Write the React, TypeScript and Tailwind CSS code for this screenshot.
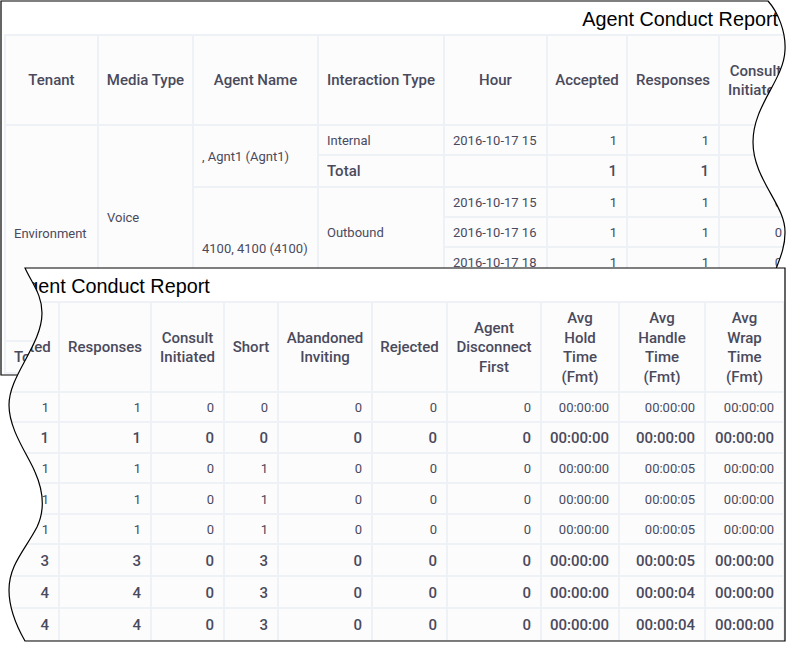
const head = "border-2 border-[#eef1f5] px-1 pt-[2px] text-center align-middle text-[15px] font-medium leading-[19.5px] whitespace-nowrap";
const cell = "border-2 border-[#eef1f5] px-[8px] pt-px text-[13px] align-middle whitespace-nowrap";
const num = "border-2 border-[#eef1f5] pr-[9px] pl-0 pt-px text-right text-[13px] align-middle whitespace-nowrap";
const totalNum = "border-2 border-[#eef1f5] pr-[9px] pl-0 pt-px text-right text-[15px] font-medium align-middle whitespace-nowrap";
const frontNum = "border-2 border-[#eef1f5] pr-[9px] pl-0 pt-[2px] text-right text-[13px] align-middle whitespace-nowrap";
const frontTotal = "border-2 border-[#eef1f5] pr-[9px] pl-0 pt-[2px] text-right text-[15px] font-medium align-middle whitespace-nowrap";

const backRows = [
  ["2016-10-17 15", "1", "1", "0"],
  ["2016-10-17 16", "1", "1", "0"],
  ["2016-10-17 18", "1", "1", "0"],
];

const frontCols = [80, 92, 73, 54, 94, 75, 94, 78, 86, 79];
const frontHeaders = [
  ["Accepted"],
  ["Responses"],
  ["Consult", "Initiated"],
  ["Short"],
  ["Abandoned", "Inviting"],
  ["Rejected"],
  ["Agent", "Disconnect", "First"],
  ["Avg", "Hold", "Time", "(Fmt)"],
  ["Avg", "Handle", "Time", "(Fmt)"],
  ["Avg", "Wrap", "Time", "(Fmt)"],
];

const frontRows = [
  { total: false, h: "h-[30px]", v: ["1", "1", "0", "0", "0", "0", "0", "00:00:00", "00:00:00", "00:00:00"] },
  { total: true, h: "h-[31px]", v: ["1", "1", "0", "0", "0", "0", "0", "00:00:00", "00:00:00", "00:00:00"] },
  { total: false, h: "h-[30px]", v: ["1", "1", "0", "1", "0", "0", "0", "00:00:00", "00:00:05", "00:00:00"] },
  { total: false, h: "h-[31px]", v: ["1", "1", "0", "1", "0", "0", "0", "00:00:00", "00:00:05", "00:00:00"] },
  { total: false, h: "h-[30px]", v: ["1", "1", "0", "1", "0", "0", "0", "00:00:00", "00:00:05", "00:00:00"] },
  { total: true, h: "h-[32px]", v: ["3", "3", "0", "3", "0", "0", "0", "00:00:00", "00:00:05", "00:00:00"] },
  { total: true, h: "h-[32px]", v: ["4", "4", "0", "3", "0", "0", "0", "00:00:00", "00:00:04", "00:00:00"] },
  { total: true, h: "h-[33px]", v: ["4", "4", "0", "3", "0", "0", "0", "00:00:00", "00:00:04", "00:00:00"] },
];

function BackPanel() {
  return (
    <div className="absolute left-0 top-0 h-[376px] w-[787px]">
      <div className="h-full w-full overflow-hidden bg-white [clip-path:path('M1,1H768C778,12_786,32_785,50C784,80_753,105_753,142C753,180_786,205_785,233C785,250_778,262_772,280V375H1Z')]">
        <div className="flex h-[34px] items-center justify-end pr-[9px] pt-[5px] font-['Liberation_Sans',sans-serif] text-[19.8px] text-black">
          Agent Conduct Report
        </div>
        <table className="ml-[4px] w-[787px] table-fixed border-collapse bg-[#fcfcfd] font-['Roboto',sans-serif] text-[#4a4a5c]">
          <colgroup>
            <col className="w-[93px]" />
            <col className="w-[95px]" />
            <col className="w-[125px]" />
            <col className="w-[126px]" />
            <col className="w-[103px]" />
            <col className="w-[80px]" />
            <col className="w-[92px]" />
            <col className="w-[73px]" />
          </colgroup>
          <thead>
            <tr className="h-[90px]">
              {["Tenant", "Media Type", "Agent Name", "Interaction Type", "Hour", "Accepted", "Responses"].map((t) => (
                <th key={t} className={head}>{t}</th>
              ))}
              <th className={head}>Consult<br />Initiated</th>
            </tr>
          </thead>
          <tbody>
            <tr className="h-[30px]">
              <td rowSpan={7} className={cell}>Environment</td>
              <td rowSpan={6} className={cell}>Voice</td>
              <td rowSpan={2} className={cell}>, Agnt1 (Agnt1)</td>
              <td className={cell}>Internal</td>
              <td className={cell}>2016-10-17 15</td>
              <td className={num}>1</td>
              <td className={num}>1</td>
              <td className={num}>0</td>
            </tr>
            <tr className="h-[32px]">
              <td className={`${cell} !text-[15px] font-medium`}>Total</td>
              <td className={cell}></td>
              <td className={totalNum}>1</td>
              <td className={totalNum}>1</td>
              <td className={totalNum}>0</td>
            </tr>
            {backRows.map((r, i) => (
              <tr key={r[0]} className="h-[30px]">
                {i === 0 && <td rowSpan={4} className={cell}>4100, 4100 (4100)</td>}
                {i === 0 && <td rowSpan={3} className={cell}>Outbound</td>}
                <td className={cell}>{r[0]}</td>
                <td className={num}>{r[1]}</td>
                <td className={num}>{r[2]}</td>
                <td className={num}>{r[3]}</td>
              </tr>
            ))}
            <tr className="h-[32px]">
              <td colSpan={2} className={cell}>Total</td>
              <td className={totalNum}>3</td>
              <td className={totalNum}>3</td>
              <td className={totalNum}>0</td>
            </tr>
            <tr className="h-[32px]">
              <td colSpan={4} className={cell}>Total</td>
              <td className={totalNum}>4</td>
              <td className={totalNum}>4</td>
              <td className={totalNum}>0</td>
            </tr>
            <tr className="h-[32px]">
              <td colSpan={5} className={`${cell} !text-[15px] font-medium`}>Total</td>
              <td className={totalNum}>4</td>
              <td className={totalNum}>4</td>
              <td className={totalNum}>0</td>
            </tr>
          </tbody>
        </table>
      </div>
      <svg className="pointer-events-none absolute left-0 top-0" width="787" height="376" fill="none" stroke="black" strokeWidth="1.2">
        <path d="M1,1H768C778,12 786,32 785,50C784,80 753,105 753,142C753,180 786,205 785,233C785,250 778,262 772,280V375H1Z" />
      </svg>
    </div>
  );
}

function FrontPanel() {
  return (
    <div className="absolute left-0 top-0 h-[649px] w-[787px]">
      <div className="h-full w-full overflow-hidden bg-white [clip-path:path('M25,268H785V641H25C17,627_9,610_9,590C9,565_25,550_37,527C45,510_43,490_35,472C28,455_9,430_9,405C9,375_42,345_42,313C42,295_33,285_25,268Z')]">
        <div className="flex h-[301px] items-end pb-[1px] pl-[14px] font-['Liberation_Sans',sans-serif] text-[19.8px] leading-[28px] text-black">
          Agent Conduct Report
        </div>
        <table className="ml-[-22px] w-[805px] table-fixed border-collapse bg-[#fcfcfd] font-['Roboto',sans-serif] text-[#4a4a5c]">
          <colgroup>
            {frontCols.map((w, i) => (
              <col key={i} width={w} />
            ))}
          </colgroup>
          <thead>
            <tr className="h-[90px]">
              {frontHeaders.map((lines) => (
                <th key={lines.join(" ")} className={head}>
                  {lines.map((l, i) => (
                    <div key={i}>{l}</div>
                  ))}
                </th>
              ))}
            </tr>
          </thead>
          <tbody>
            {frontRows.map((row, i) => (
              <tr key={i} className={row.h}>
                {row.v.map((v, j) => (
                  <td key={j} className={row.total ? frontTotal : frontNum}>{v}</td>
                ))}
              </tr>
            ))}
          </tbody>
        </table>
      </div>
      <svg className="pointer-events-none absolute left-0 top-0" width="787" height="649" fill="none" stroke="black" strokeWidth="1.2">
        <path d="M25,268H785V641H25C17,627 9,610 9,590C9,565 25,550 37,527C45,510 43,490 35,472C28,455 9,430 9,405C9,375 42,345 42,313C42,295 33,285 25,268Z" />
      </svg>
    </div>
  );
}

export default function App() {
  return (
    <div className="relative h-[649px] w-[787px] overflow-hidden bg-white">
      <BackPanel />
      <FrontPanel />
    </div>
  );
}
